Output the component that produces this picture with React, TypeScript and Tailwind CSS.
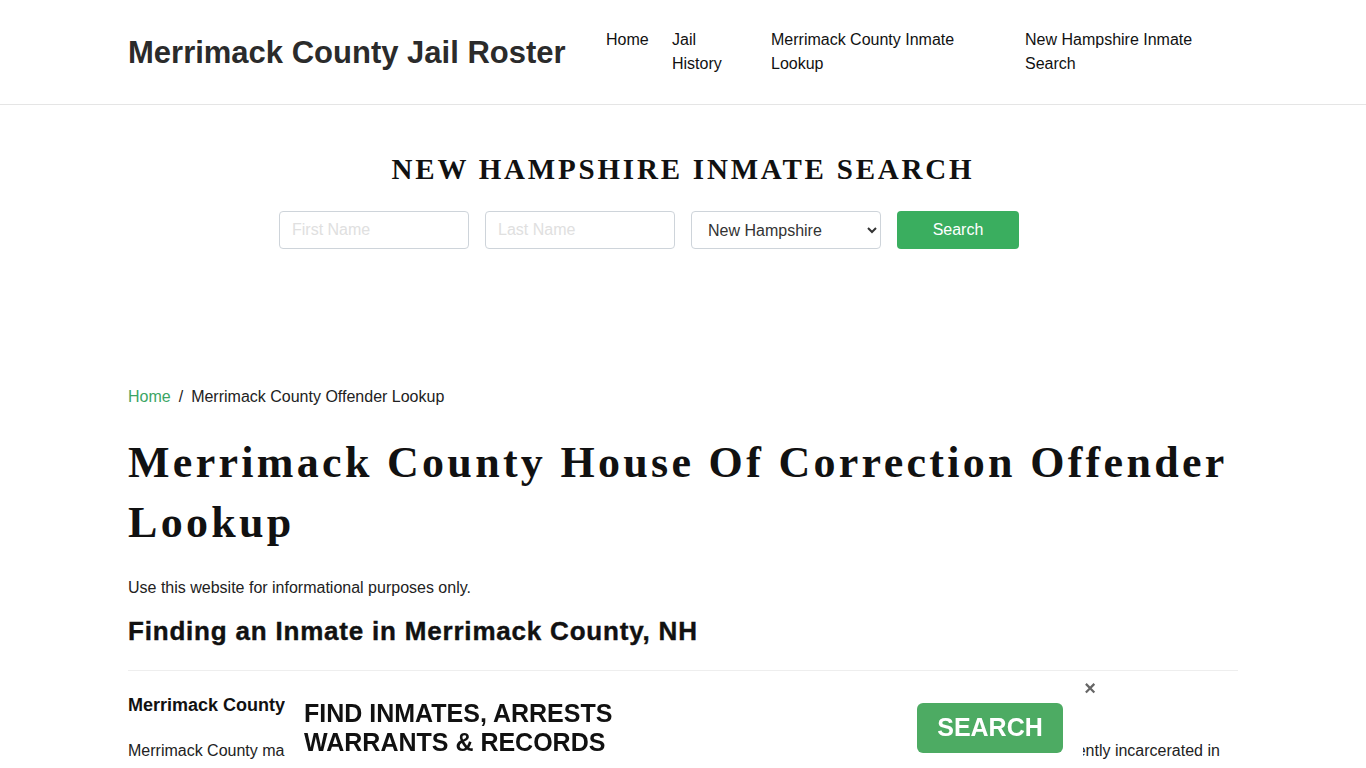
import React from "react";

const navItems = [
  { label: "Home", width: "w-[66px]", inner: "w-[50px]" },
  { label: "Jail History", width: "w-[99px]", inner: "w-[60px]" },
  { label: "Merrimack County Inmate Lookup", width: "w-[254px]", inner: "w-[200px]" },
  { label: "New Hampshire Inmate Search", width: "w-[213px]", inner: "w-[180px]" },
];

function Header() {
  return (
    <header className="border-b border-[#e5e5e5] bg-white">
      <div className="mx-auto flex h-[104px] w-[1110px] items-center justify-between">
        <a className="pt-[2px] text-[31px] font-bold text-[#2b2b2b]">Merrimack County Jail Roster</a>
        <nav className="flex self-start pt-[28px]">
          {navItems.map((item) => (
            <a key={item.label} className={`${item.width} text-[16px] leading-6 text-[#111]`}>
              <span className={`block ${item.inner}`}>{item.label}</span>
            </a>
          ))}
        </nav>
      </div>
    </header>
  );
}

function SearchBar() {
  return (
    <section className="mx-auto w-[1110px] pt-[47px]">
      <h2 className="text-center font-['Liberation_Serif',serif] text-[29px] font-bold leading-[34px] tracking-[2.8px] text-[#111]">
        NEW HAMPSHIRE INMATE SEARCH
      </h2>
      <form className="mt-[25px] flex gap-4 pl-[151px]">
        <input
          className="h-[38px] w-[190px] rounded border border-[#ced4da] px-3 text-[16px] placeholder:text-[#e0e0e0]"
          placeholder="First Name"
        />
        <input
          className="h-[38px] w-[190px] rounded border border-[#ced4da] px-3 text-[16px] placeholder:text-[#e0e0e0]"
          placeholder="Last Name"
        />
        <select className="h-[38px] w-[190px] rounded border border-[#ced4da] bg-white px-3 text-[16px] text-[#333]" defaultValue="nh">
          <option value="nh">New Hampshire</option>
        </select>
        <button type="button" className="h-[38px] w-[122px] rounded bg-[#3aae5f] text-[16px] text-white">
          Search
        </button>
      </form>
    </section>
  );
}

function Content() {
  return (
    <main className="mx-auto w-[1110px] pt-[136px] pb-[200px]">
      <div className="flex text-[16px] leading-6 text-[#222]">
        <a className="text-[#3ba564]">Home</a>
        <span className="px-2">/</span>
        <span>Merrimack County Offender Lookup</span>
      </div>
      <h1 className="mt-[24px] font-['Liberation_Serif',serif] text-[44px] font-bold leading-[60px] tracking-[3.3px] text-[#111]">
        Merrimack County House Of Correction Offender Lookup
      </h1>
      <p className="mt-[23px] text-[16px] leading-6 text-[#222]">Use this website for informational purposes only.</p>
      <h3 className="mt-[17px] text-[26px] font-bold leading-[29px] tracking-[0.8px] text-[#111] [-webkit-text-stroke:0.4px_#111]">
        Finding an Inmate in Merrimack County, NH
      </h3>
      <hr className="mt-[24px] border-[#eee]" />
      <h4 className="mt-[22px] text-[18px] font-bold leading-6 text-[#111]">Merrimack County Inmate Search and Jail Records</h4>
      <p className="mt-[22px] text-[16px] leading-6 text-[#222]">
        Merrimack County maintains records on every offender who has been booked into county jail, and a roster of the inmates who are currently incarcerated in
        the Merrimack County House Of Correction can be searched online by name or booking number.
      </p>
    </main>
  );
}

function Banner() {
  return (
    <div className="fixed bottom-0 left-[285px] h-[92px] w-[798px] bg-white">
      <div className="flex h-full items-start justify-between pl-[19px] pr-[20px] pt-[23px]">
        <p className="text-[25px] font-bold leading-[29px] text-[#111]">
          FIND INMATES, ARRESTS
          <br />
          WARRANTS &amp; RECORDS
        </p>
        <button type="button" className="mt-[4px] h-[50px] w-[146px] rounded-md bg-[#4dab63] text-[25px] font-bold text-white">
          SEARCH
        </button>
      </div>
      <button type="button" className="absolute right-[-13px] top-[2px] text-[20px] font-bold leading-none text-[#666]">
        ×
      </button>
    </div>
  );
}

export default function App() {
  return (
    <div className="min-h-screen bg-white font-['Liberation_Sans',Arial,sans-serif]">
      <Header />
      <SearchBar />
      <Content />
      <Banner />
    </div>
  );
}
